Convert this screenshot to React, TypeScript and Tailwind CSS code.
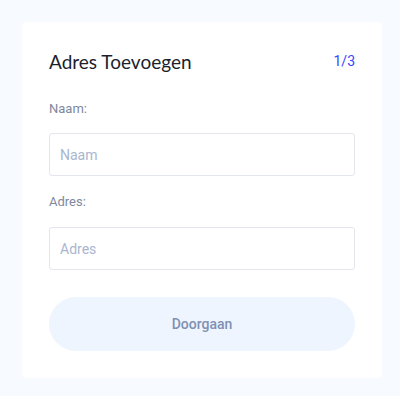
import React from "react";

export default function App() {
  return (
    <div className="w-[400px] h-[396px] bg-[#f7faff] pt-[22px] pl-[22px]">
      <div className="bg-white rounded-[4px] w-[360px] h-[356px] px-[27px] pt-[28px] flex flex-col">
        <div className="flex items-center justify-between h-[22px]">
          <span className="text-[19px] text-[#1b1f2e] leading-none" style={{ fontFamily: "Lato, 'Noto Sans', sans-serif" }}>
            Adres Toevoegen
          </span>
          <span className="text-[14px] text-[#3347ff] leading-none" style={{ fontFamily: "Roboto, sans-serif" }}>
            1/3
          </span>
        </div>
        <div className="flex flex-col" style={{ fontFamily: "Roboto, sans-serif" }}>
          <label className="mt-[29px] text-[13px] text-[#7e889e] leading-[16px]">Naam:</label>
          <input
            placeholder="Naam"
            className="mt-[16px] h-[43px] w-full border border-[#e3e6ec] rounded-[3px] px-[10px] text-[14px] text-[#333] placeholder:text-[#a9b6cf] outline-none"
          />
          <label className="mt-[18px] text-[13px] text-[#7e889e] leading-[16px]">Adres:</label>
          <input
            placeholder="Adres"
            className="mt-[17px] h-[43px] w-full border border-[#e3e6ec] rounded-[3px] px-[10px] text-[14px] text-[#333] placeholder:text-[#a9b6cf] outline-none"
          />
          <button className="mt-[27px] h-[54px] w-full rounded-full bg-[#eef5ff] text-[14px] font-medium text-[#7f90b3]">
            Doorgaan
          </button>
        </div>
      </div>
    </div>
  );
}
